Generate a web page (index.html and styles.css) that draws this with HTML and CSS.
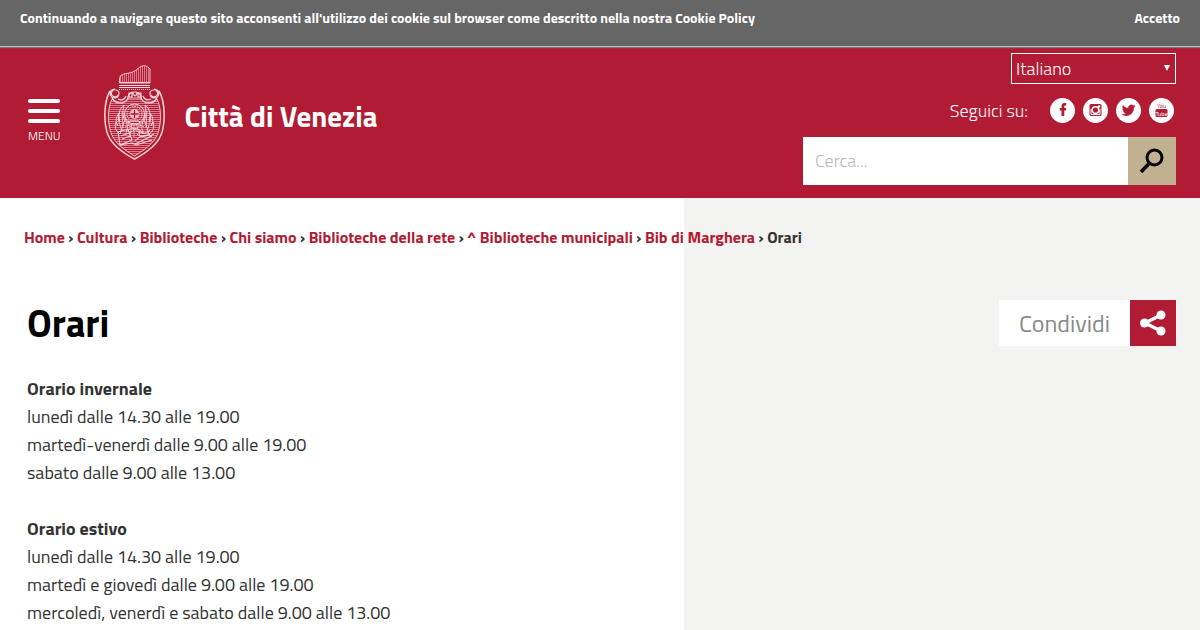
FILE: index.html
```html
<!DOCTYPE html>
<html lang="it">
<head>
    <meta charset="UTF-8">
    <meta name="viewport" content="width=device-width, initial-scale=1.0">
    <title>Orari | Città di Venezia</title>
    <link rel="stylesheet" href="styles.css">
</head>
<body>
    <div class="cookie-bar">
        <p>Continuando a navigare questo sito acconsenti all'utilizzo dei cookie sul browser come descritto nella nostra <a href="#">Cookie Policy</a></p>
        <button type="button" class="cookie-accept">Accetto</button>
    </div>

    <header class="header">
        <div class="brand">
            <button type="button" class="menu-button">
                <span class="menu-line"></span>
                <span class="menu-line"></span>
                <span class="menu-line"></span>
                <span class="menu-label">MENU</span>
            </button>
            <a href="#" class="logo">
                <svg class="crest" viewBox="0 0 62 96" width="62" height="96" fill="none" stroke="#f7d5da" aria-hidden="true">
                    <defs>
                        <pattern id="rows" width="4" height="2" patternUnits="userSpaceOnUse">
                            <path d="M0 .5h4" stroke="#d9788a" stroke-width="1"/>
                        </pattern>
                        <pattern id="ribs" width="2" height="4" patternUnits="userSpaceOnUse">
                            <path d="M.5 0v4" stroke="#d9788a" stroke-width="1"/>
                        </pattern>
                    </defs>
                    <!-- ducal cap -->
                    <path d="M15.500 18V14q0-4 4-5c7-1 11-2 15-6 5-4 9-2 11.500 1V18z" fill="url(#ribs)" stroke-width=".9"/>
                    <path d="M15 17.500h31M15 20.500h31M15 22.500h31" stroke-width="1.200"/>
                    <path d="M15 24.500h31" stroke-width="1" stroke-dasharray="1 1"/>
                    <!-- shield -->
                    <path d="M6 26C-1 38 0 60 4 70c5 12 17 19 26.500 24C40 89 52 82 57 70c4-10 5-32-2-44" stroke-width="1.500"/>
                    <path d="M8 34C3 44 4 59 7 68c4 11 14 17 23.500 23C40 85 50 79 54 68c3-9 4-24-1-34-7 5-13 4-17-1H25c-4 5-10 6-17 1z" fill="url(#rows)" stroke-width=".9"/>
                    <path d="M14 30a3.500 3.500 0 1 1-2-5c5 1 3 8-1 8-6 0-7-9 0-9M47 30a3.500 3.500 0 1 0 2-5c-5 1-3 8 1 8 6 0 7-9 0-9" stroke-width="1.200"/>
                    <path d="M8 32c2 8 15 8 16 0 1-4 3-5 6.500-5s5.500 1 6.500 5c1 8 14 8 16 0M14 34c4 2 7 0 8-3M47 34c-4 2-7 0-8-3" stroke-width="1.200"/>
                    <path d="M25 28v4h3v-4zM29 28q2 6 4 0M34 28v4h3v-4z" stroke-width="1.200"/>
                    <!-- winged lion with the book -->
                    <circle cx="30.500" cy="49" r="10" stroke-width="1"/>
                    <circle cx="30.500" cy="49" r="7.500" stroke-width="1" stroke-dasharray="1.500 1"/>
                    <circle cx="30.500" cy="49" r="4.500" fill="#f3c6cd" stroke-width=".7"/>
                    <path d="M30.500 45v8M26.500 49h8" stroke="#a51a33" stroke-width="1.300"/>
                    <path d="M21 55C18 51 19 45 20 40c-5 4-6 9-4 17-2-2-2-6-1-9-4 5-3 9-1 13l-2-4c-2 5 0 9 4 12 2-6 3-10 5-14zM40 55c3-4 2-10 1-15 5 4 6 9 4 17 2-2 2-6 1-9 4 5 3 9 1 13l2-4c2 5 0 9-4 12-2-6-3-10-5-14z" stroke-width="1"/>
                    <path d="M18 46l1 17M14 54l4 12M43 46l-1 17M47 54l-4 12M22 58q8-5 17 0M21 62q9-6 19 0M22 66q8-6 17 1M25 55l-3 14M35 56l5 13M28 58l-2 13M32 58l4 13M30 60v12M24 60l12 8M37 60l-11 8M20 50l3 10M41 50l-3 10" stroke-width=".8"/>
                    <path d="M14 67l10-3 4 11-12 5zM16 80l12-2 4 2 16-5M17 71l8-3M18 74l8-3M31 76q7-8 15-5l4-2M31 79l17-8M33 69q4 5 13 0M35 66q6 5 11-1" stroke-width="1.100"/>
                </svg>
                <span class="site-name">Città di Venezia</span>
            </a>
        </div>

        <div class="tools">
            <div class="language">
                <select aria-label="Lingua">
                    <option>Italiano</option>
                    <option>English</option>
                </select>
            </div>
            <div class="social">
                <span class="social-label">Seguici su:</span>
                <a href="#" aria-label="Facebook">
                    <svg viewBox="0 0 25 25" width="25" height="25">
                        <circle cx="12.500" cy="12.500" r="12.500" fill="#fff"/>
                        <path d="M11.500 18v-5.500H9.800V10h1.700V8.300c0-2.100 1-3.300 3.200-3.300h1.500v2.500h-.9c-.8 0-1 .3-1 1V10h1.900l-.3 2.500h-1.600V18z" fill="#b11b33"/>
                    </svg>
                </a>
                <a href="#" aria-label="Instagram">
                    <svg viewBox="0 0 25 25" width="25" height="25">
                        <circle cx="12.500" cy="12.500" r="12.500" fill="#fff"/>
                        <rect x="6.500" y="6" width="12" height="12" rx="1.500" fill="#b11b33"/>
                        <path d="M8 11v5.500h9V11" fill="none" stroke="#fff" stroke-width="1"/>
                        <circle cx="12.500" cy="12" r="3.300" fill="#b11b33" stroke="#fff" stroke-width="1.500"/>
                        <rect x="15" y="7.300" width="2.200" height="2.200" fill="#fff"/>
                    </svg>
                </a>
                <a href="#" aria-label="Twitter">
                    <svg viewBox="0 0 25 25" width="25" height="25">
                        <circle cx="12.500" cy="12.500" r="12.500" fill="#fff"/>
                        <path d="M19 8.200c-.4.200-.9.400-1.400.4.500-.3.900-.8 1.100-1.400-.5.300-1 .5-1.600.6a2.700 2.700 0 0 0-4.600 2.500c-2.200-.1-4-1.100-5.500-2.800-.7 1.200-.4 2.700.8 3.600-.4 0-.8-.1-1.200-.3 0 1.300.9 2.400 2.100 2.700-.4.100-.8.100-1.200 0 .4 1.100 1.400 1.900 2.600 1.900-1.100.9-2.500 1.300-3.900 1.100 5.300 3.200 11.600-.3 11.500-6.900.5-.4 1-.8 1.300-1.400z" fill="#b11b33" stroke="#b11b33" stroke-width=".5"/>
                    </svg>
                </a>
                <a href="#" aria-label="YouTube">
                    <svg viewBox="0 0 25 25" width="25" height="25">
                        <circle cx="12.500" cy="12.500" r="12.500" fill="#fff"/>
                        <rect x="6.500" y="11" width="12" height="8" rx="1.500" fill="#b11b33"/>
                        <g class="youtube-text" text-anchor="middle">
                            <text x="12.500" y="10" fill="#b11b33">You</text>
                            <text x="12.500" y="17.500" fill="#fff">Tube</text>
                        </g>
                    </svg>
                </a>
            </div>
            <form class="search">
                <input type="text" placeholder="Cerca..." aria-label="Cerca">
                <button type="submit" aria-label="Cerca">
                    <svg viewBox="0 0 26 26" width="26" height="26" fill="none" stroke="#000">
                        <circle cx="15.500" cy="9.500" r="7.500" stroke-width="3"/>
                        <path d="M10.500 15L2 24" stroke-width="3.500"/>
                    </svg>
                </button>
            </form>
        </div>
    </header>

    <main class="page">
        <nav class="breadcrumb" aria-label="Percorso">
            <a href="#">Home</a> › <a href="#">Cultura</a> › <a href="#">Biblioteche</a> › <a href="#">Chi siamo</a> › <a href="#">Biblioteche della rete</a> › <a href="#">^ Biblioteche municipali</a> › <a href="#">Bib di Marghera</a> › Orari
        </nav>

        <div class="title-row">
            <h1>Orari</h1>
            <button type="button" class="share">
                <span class="share-label">Condividi</span>
                <span class="share-icon">
                    <svg viewBox="0 0 26 26" width="26" height="26" fill="#fff" stroke="#fff" aria-hidden="true">
                        <path d="M21 5L5 13l16 8" fill="none" stroke-width="3.500"/>
                        <circle cx="21" cy="5" r="4.500" stroke="none"/>
                        <circle cx="4.500" cy="13" r="4.500" stroke="none"/>
                        <circle cx="21" cy="21" r="4.500" stroke="none"/>
                    </svg>
                </span>
            </button>
        </div>

        <div class="content">
            <p>
                <strong>Orario invernale</strong><br>
                lunedì dalle 14.30 alle 19.00<br>
                martedì-venerdì dalle 9.00 alle 19.00<br>
                sabato dalle 9.00 alle 13.00
            </p>
            <p>
                <strong>Orario estivo</strong><br>
                lunedì dalle 14.30 alle 19.00<br>
                martedì e giovedì dalle 9.00 alle 19.00<br>
                mercoledì, venerdì e sabato dalle 9.00 alle 13.00
            </p>
        </div>
    </main>
</body>
</html>
```
FILE: styles.css
```css
:root {
    --red: #b11b33;
    --sand: #c2b191;
    --side: #f3f3f1;
    --text: #333;
}

* {
    margin: 0;
    padding: 0;
    box-sizing: border-box;
}

body {
    min-height: 100vh;
    font-family: "Titillium Web", Roboto, "Open Sans", sans-serif;
    font-size: 18px;
    line-height: 28px;
    color: var(--text);
    background: linear-gradient(to right, #fff 57%, var(--side) 57%);
}

a {
    color: inherit;
    text-decoration: none;
}

button {
    border: none;
    background: none;
    font-family: inherit;
    color: inherit;
    cursor: pointer;
}

svg {
    display: block;
}

.cookie-bar {
    display: flex;
    justify-content: space-between;
    align-items: flex-start;
    padding: 8px 20px 18px;
    background: #666;
    border-bottom: 1px solid #c4c0c1;
    box-shadow: 0 1px 1px #777;
    position: relative;
    color: #fff;
    font-size: 14px;
    font-weight: bold;
    line-height: 20px;
}

.cookie-accept {
    font-size: 14px;
    font-weight: bold;
    line-height: 20px;
}

.header {
    display: flex;
    justify-content: space-between;
    padding: 6px 24px 13px 28px;
    background: var(--red);
    color: #fff;
}

.brand {
    display: flex;
    align-items: flex-start;
    gap: 44px;
    padding-top: 12px;
}

.menu-button {
    display: flex;
    flex-direction: column;
    gap: 6px;
    padding-top: 34px;
}

.menu-line {
    width: 32px;
    height: 4px;
    border-radius: 2px;
    background: #fff;
}

.menu-label {
    font-size: 12px;
    font-weight: 300;
    line-height: 14px;
}

.logo {
    display: flex;
    align-items: center;
    gap: 18px;
}

.site-name {
    padding-top: 6px;
    font-size: 29px;
    font-weight: bold;
    line-height: 32px;
}

.tools {
    display: flex;
    flex-direction: column;
    align-items: flex-end;
    gap: 14px;
}

.language {
    position: relative;
}

.language::after {
    content: "";
    position: absolute;
    top: 12px;
    right: 6px;
    border: 3px solid transparent;
    border-top: 6px solid #fff;
    border-bottom: none;
    pointer-events: none;
}

.language select {
    display: block;
    width: 165px;
    height: 31px;
    padding: 0 4px;
    border: 1px solid #fff;
    border-radius: 0;
    appearance: none;
    background: var(--red);
    color: #fff;
    font-family: inherit;
    font-size: 18px;
    font-weight: 300;
}

.social {
    display: flex;
    align-items: center;
    gap: 8px;
    height: 25px;
    padding-right: 2px;
}

.social-label {
    margin-right: 14px;
    font-size: 18px;
    font-weight: 300;
}

.youtube-text {
    font-family: "Liberation Sans Narrow", "Titillium Web", sans-serif;
    font-size: 6px;
}

.search {
    display: flex;
    height: 48px;
}

.search input {
    width: 325px;
    padding: 0 12px 2px;
    border: none;
    background: #fff;
    font-family: inherit;
    font-size: 18px;
    font-weight: 300;
}

.search input::placeholder {
    color: #bbb;
}

.search button {
    display: flex;
    align-items: center;
    justify-content: center;
    width: 48px;
    background: var(--sand);
}

.page {
    padding: 26px 24px 0;
}

.breadcrumb {
    font-size: 16px;
    font-weight: bold;
    line-height: 26px;
}

.breadcrumb a {
    color: var(--red);
}

.title-row {
    display: flex;
    justify-content: space-between;
    align-items: center;
    padding: 50px 0 29px 3px;
}

.title-row h1 {
    font-size: 38px;
    font-weight: bold;
    line-height: 44px;
    color: #000;
}

.share {
    display: flex;
    height: 46px;
    background: #fff;
    color: #888;
}

.share-label {
    padding: 0 20px;
    font-size: 24px;
    font-weight: 400;
    line-height: 46px;
}

.share-icon {
    display: flex;
    align-items: center;
    justify-content: center;
    width: 46px;
    height: 46px;
    background: var(--red);
}

.content {
    padding-left: 3px;
}

.content p + p {
    margin-top: 28px;
}
```
